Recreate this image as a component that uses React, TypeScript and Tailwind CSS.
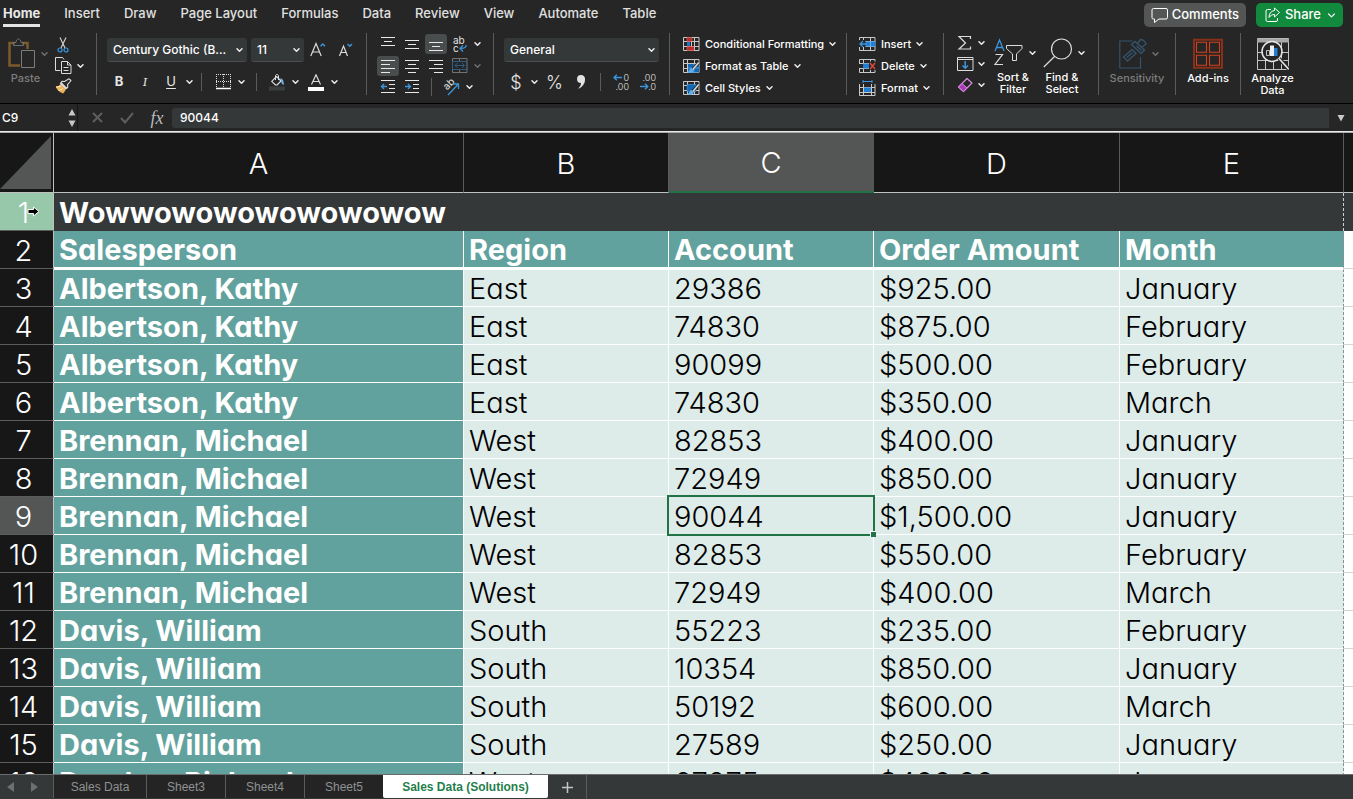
import React from "react";

type Kids = { children?: React.ReactNode };

function Chev({ dim = false, big = false }: { dim?: boolean; big?: boolean }) {
  return (
    <svg width={big ? 9 : 7} height={big ? 7 : 6} viewBox="0 0 7 6" fill="none" className="shrink-0" aria-hidden="true">
      <path d="M1 1.7 3.5 4.2 6 1.7" stroke={dim ? "#6f7070" : "#ececec"} strokeWidth={big ? 1.1 : 1.5} strokeLinecap="round" strokeLinejoin="round" />
    </svg>
  );
}

function Btn({ label, className = "", children }: Kids & { label: string; className?: string }) {
  return (
    <button type="button" aria-label={label} className={`flex shrink-0 items-center justify-center ${className}`}>
      {children}
    </button>
  );
}

function Arrow({ label, dim = false, className = "w-4" }: { label: string; dim?: boolean; className?: string }) {
  return (
    <Btn label={label} className={`h-5 ${className}`}>
      <Chev dim={dim} />
    </Btn>
  );
}

function Group({ className, children }: Kids & { className: string }) {
  return <div className={`h-[62px] shrink-0 border-r border-[#5a5b5b] ${className}`}>{children}</div>;
}

function Rule() {
  return <span className="block h-[18px] w-px shrink-0 bg-[#5a5b5b]" />;
}

function Pick({ label, value, className }: { label: string; value: string; className: string }) {
  return (
    <label className={`relative block h-6 shrink-0 ${className}`}>
      <select aria-label={label} className="block h-full w-full appearance-none rounded-[3px] border-b border-[#4a4e4f] bg-[#343839] pl-1.5 pr-4 text-[12px] font-medium text-white outline-none">
        <option>{value}</option>
      </select>
      <span className="pointer-events-none absolute right-1 top-[9px]">
        <Chev />
      </span>
    </label>
  );
}

const PasteIcon = () => (
  <svg width="28" height="32" viewBox="0 0 28 32" fill="none">
    <path d="M7 5H1.500V27.500H12" stroke="#7d5a2c" strokeWidth="2.500" />
    <path d="M14 5h5.500v6" stroke="#7d5a2c" strokeWidth="2.500" />
    <path d="M5.500 7.500V4.500H8C8 2.500 9 1 10.500 1S13 2.500 13 4.500h2.500v3z" stroke="#6d6e6e" />
    <path d="M13.500 12.500h13v17h-13z" fill="#262626" stroke="#7b7c7c" />
  </svg>
);
const CutIcon = () => (
  <svg width="12" height="16" viewBox="0 0 12 16" fill="none">
    <path d="M3 .5 8 11M9 .5 4 11" stroke="#d8d8d8" strokeWidth="1.100" />
    <circle cx="3" cy="13" r="2" stroke="#3b95dc" strokeWidth="1.200" />
    <circle cx="9" cy="13" r="2" stroke="#3b95dc" strokeWidth="1.200" />
  </svg>
);
const CopyIcon = () => (
  <svg width="17" height="17" viewBox="0 0 17 17" fill="none" stroke="#dcdcdc">
    <path d="M5.500 13.500h-5V.5h7l1.500 2" />
    <path d="M6.500 4.500h6l3.500 3.500v8.500H6.500z" fill="#262626" />
    <path d="M12.500 4.500V8H16M8.500 10.500h5M8.500 13.500h5" />
  </svg>
);
const BrushIcon = () => (
  <svg width="17" height="16" viewBox="0 0 17 16" fill="none">
    <path d="M5.500 6C4 8 2.500 8.500.7 8.500c1 3 3.800 5.700 7.300 7 1.500-1.500 2.500-3 2.800-4.500z" fill="#eeb155" />
    <path d="M1 9c2 0 3.500-.3 5-1M3.500 12.200c1.800 0 3-.6 4.200-1.700" stroke="#fff1d5" />
    <path d="m6 4.500 5.800 5.800 1-1.300-.3-2.300L16 2.500 14 .8 9.500 3.500 7 3.300z" stroke="#dcdcdc" strokeWidth="1.100" strokeLinejoin="round" fill="#262626" />
    <path d="m5.300 5 6 6" stroke="#dcdcdc" strokeWidth="1.500" />
  </svg>
);
const FontSize = ({ up }: { up: boolean }) => (
  <svg width="16" height="16" viewBox="0 0 16 16" fill="none">
    {up ? <path d="M.8 14 6 1.500 11.200 14M2.500 10h7" stroke="#dcdcdc" strokeWidth="1.200" /> : <path d="M1.500 14 5.500 4 9.500 14M3 10.500h5" stroke="#dcdcdc" strokeWidth="1.200" />}
    <path d={up ? "M10.500 4.200 12.800 2l2.200 2.200" : "M9.500 2 11.800 4.200 14 2"} stroke="#3b95dc" strokeWidth="1.400" />
  </svg>
);
const BordersIcon = () => (
  <svg width="16" height="16" viewBox="0 0 16 16" fill="none">
    <path d="M0 .5h15M0 7.500h15" stroke="#dcdcdc" strokeDasharray="1 1" />
    <path d="M.5 0v13M7.500 0v13M14.500 0v13" stroke="#dcdcdc" strokeDasharray="1 1" />
    <path d="M0 14.500h15" stroke="#fff" strokeWidth="1.500" />
  </svg>
);
const FillIcon = () => (
  <svg width="17" height="17" viewBox="0 0 17 17" fill="none">
    <path d="M0 12.500h16v4H0z" fill="#3a3e3f" />
    <path d="M7.500 2.500 2.700 7.300 6.500 11h1.500l4-4z" stroke="#dcdcdc" strokeWidth="1.100" strokeLinejoin="round" />
    <path d="M6.500 6V2C6.500 0 9.500 0 9.500 2v4" stroke="#dcdcdc" />
    <path d="M11 4.500c2.500-.5 4 2 3.800 6.500-1.700-.5-2.800-2.500-2.600-4z" fill="#6fb4ec" />
  </svg>
);
const FontColorIcon = () => (
  <svg width="17" height="17" viewBox="0 0 17 17" fill="none">
    <path d="M0 13h16v4H0z" fill="#fff" />
    <path d="M3.500 10.500 8 .8l4.500 9.700M5 7.500h6" stroke="#dcdcdc" strokeWidth="1.200" />
  </svg>
);
const Lines = ({ d }: { d: string }) => (
  <svg width="16" height="16" viewBox="0 0 16 16" fill="none">
    <path d={d} stroke="#e8e8e8" />
  </svg>
);
const IndentIcon = ({ out }: { out: boolean }) => (
  <svg width="16" height="16" viewBox="0 0 16 16" fill="none">
    <path d="M1 1.500h14M9 5.500h6M9 9.500h6M1 13.500h14" stroke="#e8e8e8" />
    <path d={out ? "M7 7.500H1.500M4 5 1.500 7.500 4 10" : "M1 7.500h5.500M4 5l2.500 2.500L4 10"} stroke="#3b95dc" strokeWidth="1.300" />
  </svg>
);
const WrapIcon = () => (
  <svg width="16" height="17" viewBox="0 0 16 17" fill="none">
    <text x="1" y="8" fontSize="10" fontFamily="Inter, sans-serif" fill="#e2e2e2">ab</text>
    <text x="1" y="16" fontSize="10" fontFamily="Inter, sans-serif" fill="#e2e2e2">c</text>
    <path d="M14 9c.5 2-1 3.500-6 3.500M11 9.500l-3 3 3 3" stroke="#3b95dc" strokeWidth="1.400" />
  </svg>
);
const MergeIcon = () => (
  <svg width="16" height="16" viewBox="0 0 16 16" fill="none">
    <path d="M.5.500h14.500v14H.5zM7.500.5v3M7.500 11.500v3" stroke="#707273" />
    <path d="M.5 3.500h14.500v8H.5zM3 7.500h9.500M5.500 5 3 7.500 5.500 10M10 5l2.500 2.500L10 10" stroke="#2f5b7d" />
  </svg>
);
const OrientIcon = () => (
  <svg width="18" height="17" viewBox="0 0 18 17" fill="none">
    <text x="4" y="11" fontSize="10" fontFamily="Inter, sans-serif" fill="#e2e2e2" transform="rotate(-45 5 10)">ab</text>
    <path d="M6 16 16 5.500M11.500 5H16.500V10" stroke="#3b95dc" strokeWidth="1.300" />
  </svg>
);
const DecimalIcon = ({ inc }: { inc: boolean }) => (
  <svg width="17" height="18" viewBox="0 0 17 18" fill="none">
    <text x="16" y="8" textAnchor="end" fontSize="9" fontFamily="Inter, sans-serif" fill="#e2e2e2">{inc ? "0" : ".00"}</text>
    <text x="16" y="17" textAnchor="end" fontSize="9" fontFamily="Inter, sans-serif" fill="#e2e2e2">{inc ? ".00" : ".0"}</text>
    <path d={inc ? "M9 4.500H1M3.800 1.700 1 4.500l2.800 2.800" : "M0 13.500h7.500M5 10.700l2.800 2.800L5 16.300"} stroke="#3b95dc" strokeWidth="1.400" />
  </svg>
);
const Grid = ({ children }: Kids) => (
  <svg width="17" height="16" viewBox="0 0 17 16" fill="none">
    <path d="M.5 1.500h15.500v13H.5zM.5 5.500h15.500M.5 10.500h15.500M4.500 1v13.500M11.500 1v13.500" stroke="#c9c9c9" />
    {children}
  </svg>
);
const CondIcon = () => (
  <Grid>
    <path d="M4 1.500h5v4H4zM4 10.500h7v4H4z" fill="#b92c2c" stroke="#e05a5a" strokeWidth=".6" />
    <path d="M4 6h3v4H4z" fill="#1f74c4" />
    <path d="M8.500 5.500v5" stroke="#c9c9c9" />
  </Grid>
);
const pen = (
  <>
    <path d="M15.500 3 8 10.500 10 12.500 16.500 6z" fill="#262626" />
    <path d="m15.800 4.500-6 7" stroke="#d8d8d8" strokeWidth="1.600" />
    <path d="M8.500 10c-2 .2-1.500 3-4.500 4 2.500 2 6.800 1 6.800-2z" fill="#5fb0ec" />
  </>
);
const TableFmtIcon = () => (
  <Grid>
    <path d="M5 6h11v8.500H5z" fill="#1168b8" />
    <path d="M5 10h11M11 6v8" stroke="#5fb0ec" strokeWidth=".7" />
    {pen}
  </Grid>
);
const StylesIcon = () => (
  <Grid>
    <path d="M4 4.500h9v7H4z" fill="#1168b8" stroke="#5fb0ec" strokeWidth=".5" />
    {pen}
  </Grid>
);
const InsertIcon = () => (
  <Grid>
    <path d="M0 4h6.500v7H0z" fill="#262626" />
    <path d="M6.500 5.500h10v5h-10z" fill="#1f7fd4" />
    <path d="M11.500 5.500v5" stroke="#7fc0f4" strokeWidth=".8" />
    <path d="M8 8H1M4 5 1 8l3 3" stroke="#3b95dc" strokeWidth="1.300" />
  </Grid>
);
const DeleteIcon = () => (
  <Grid>
    <path d="M0 6h4v4H0z" fill="#262626" />
    <path d="M4 5.500h6v5H4z" fill="#1f7fd4" />
    <path d="M10 3.500h7v8.500h-7z" fill="#262626" />
    <path d="m11 5 5 6M16 5l-5 6" stroke="#e2483d" strokeWidth="1.400" />
  </Grid>
);
const FormatIcon = () => (
  <svg width="17" height="17" viewBox="0 0 17 17" fill="none">
    <path d="M.5 4v11.500h15.500V4M.5 7.500h15.500M.5 12.500h15.500M4.500 4v11.500M12.500 4v11.500" stroke="#c9c9c9" />
    <path d="M5 7.500h7v4.500H5z" fill="#1f7fd4" />
    <path d="M4 1.500h9M4 0v3M13 0v3" stroke="#3b95dc" />
  </svg>
);
const SigmaIcon = () => (
  <svg width="16" height="16" viewBox="0 0 16 16" fill="none">
    <path d="M13.500 4V1.500H2L8.500 8 2 14h11.500v-2.500" stroke="#dcdcdc" strokeWidth="1.200" />
  </svg>
);
const FillDownIcon = () => (
  <svg width="17" height="16" viewBox="0 0 17 16" fill="none">
    <path d="M.5 1.500h15.500v13H.5zM.5 3.500h15.500" stroke="#dcdcdc" />
    <path d="M8.200 5v7M5.500 9.500l2.700 2.700 2.800-2.700" stroke="#3b95dc" strokeWidth="1.500" />
  </svg>
);
const EraserIcon = () => (
  <svg width="16" height="16" viewBox="0 0 16 16" fill="none">
    <path d="M10 1.500 15 6l-8.500 8.500-5-4.500z" stroke="#d58be0" strokeWidth="1.200" strokeLinejoin="round" />
    <path d="M5 6.500 1.500 10l5 4.500 3.500-3.500z" fill="#a93bb8" stroke="#d58be0" />
  </svg>
);
const SortIcon = () => (
  <svg width="30" height="30" viewBox="0 0 30 30" fill="none">
    <path d="M1 13 5.500 2 10 13M2.500 9.500h6" stroke="#3b95dc" strokeWidth="1.300" />
    <path d="M1.500 16.500h7L1 26.500h8" stroke="#dcdcdc" strokeWidth="1.200" />
    <path d="M12.500 7.500H28v3l-5.500 5.500v6.500h-4V16l-6-5.500z" stroke="#dcdcdc" />
  </svg>
);
const FindIcon = () => (
  <svg width="30" height="30" viewBox="0 0 30 30" fill="none" stroke="#dcdcdc" strokeWidth="1.200">
    <circle cx="18.500" cy="11" r="10" />
    <path d="M11.500 18.500.8 29" />
  </svg>
);
const SensIcon = () => (
  <svg width="28" height="32" viewBox="0 0 28 32" fill="none" stroke="#33546c">
    <path d="M13.500 3H.8v27h20.700V19" strokeWidth="1.200" />
    <path d="m4.500 19 8.500-7.500 4 4L8.500 23z" strokeWidth="1.300" />
    <path d="m7.800 19.500 5.500-5" strokeWidth="1.300" />
    <path d="m12.500 6.500 3.500-3 9.500 8.500-3.500 3.500z" strokeWidth="1.400" />
    <path d="m18.500 5.500 3-4c2 0 5 2 5.500 4.500l-4.500 3.500M17.500 8l5 4.500" strokeWidth="1.400" />
  </svg>
);
const AddInsIcon = () => (
  <svg width="30" height="32" viewBox="0 0 30 32" fill="none">
    <path d="M1 1.700h28v28H1z" stroke="#8a3019" strokeWidth="2" />
    <path d="M3.500 4.200h10v10h-10zM16.500 4.200h10v10h-10zM3.500 17.200h10v10h-10zM16.500 17.200h10v10h-10z" stroke="#d0421d" strokeWidth="1.100" />
  </svg>
);
const AnalyzeIcon = () => (
  <svg width="34" height="34" viewBox="0 0 34 34" fill="none">
    <path d="M1.500 1.500h31v31h-31zM1.500 15.500h31M1.500 23.500h31M9.500 23v9M17.500 23v9M25.500 5v27" stroke="#c4c4c4" />
    <path d="M1 1.500h32v4H1z" fill="#a8a8a8" />
    <circle cx="16" cy="14.500" r="10" fill="#262626" stroke="#e6e6e6" strokeWidth="1.500" />
    <path d="m23 21.500 9.500 10.500" stroke="#262626" strokeWidth="4" />
    <path d="m23 21.500 9.500 10.500" stroke="#e6e6e6" strokeWidth="1.700" />
    <path d="M10.500 13.500h3V18.500h-3z" stroke="#c4c4c4" />
    <path d="M14 8.500h4v10.500h-4z" fill="#f0f0f0" />
    <path d="M18 11h3.500v8H18z" fill="#1f7fd4" />
  </svg>
);

const menuTabs = ["Home", "Insert", "Draw", "Page Layout", "Formulas", "Data", "Review", "View", "Automate", "Table"];

function MenuBar() {
  return (
    <header className="flex h-7 shrink-0 items-start justify-between pl-[3px] pr-2.5">
      <nav className="flex gap-6" aria-label="Ribbon tabs">
        {menuTabs.map((t, i) => (
          <a key={t} href="#ribbon" className={`border-b-3 pt-[3px] text-[13px] leading-[21px] ${i === 0 ? "border-[#e4e4e4] font-bold text-[#e8e8e8]" : "border-transparent font-medium text-[#e0e0e0]"}`}>
            {t}
          </a>
        ))}
      </nav>
      <div className="flex gap-2.5 pt-[3px]">
        <button type="button" className="flex h-6 items-center gap-[3px] rounded-[5px] bg-[#545655] px-[7px] text-[13px] font-medium text-white">
          <svg width="18" height="17" viewBox="0 0 18 17" fill="none">
            <path d="M2.500 1.500h12.500a1.500 1.500 0 0 1 1.500 1.500v7.500A1.500 1.500 0 0 1 15 12H8l-4.500 3.500V12h-1A1.500 1.500 0 0 1 1 10.500V3a1.500 1.500 0 0 1 1.500-1.500z" stroke="#fff" strokeLinejoin="round" />
          </svg>
          Comments
        </button>
        <button type="button" className="flex h-6 items-center gap-1 rounded-[5px] bg-[#128a3e] pl-2 pr-[7px] text-[13px] font-medium text-white">
          <svg width="17" height="16" viewBox="0 0 17 16" fill="none" stroke="#fff" strokeLinejoin="round">
            <path d="M7 2.500H3.500A1.500 1.500 0 0 0 2 4v9a1.500 1.500 0 0 0 1.500 1.500H12a1.500 1.500 0 0 0 1.500-1.500v-2" />
            <path d="M10.500 1 15.500 5.500l-5 4.500V7.500C8 7.500 6.500 8.500 5 10.500c0-4 2-6.500 5.500-7z" />
          </svg>
          Share
          <span className="pl-0.5"><Chev big /></span>
        </button>
      </div>
    </header>
  );
}

const alignRows = [
  ["Top align", "M1 1.500h14M4 5.500h8M1 9.500h14", "Middle align", "M1 4.500h14M4 8.500h8M1 12.500h14", "Bottom align", "M1 6.500h14M4 10.500h8M1 14.500h14"],
  ["Align left", "M1 2.500h14M1 6.500h9M1 10.500h14M1 14.500h9", "Center", "M1 2.500h14M4 6.500h8M1 10.500h14M4 14.500h8", "Align right", "M1 2.500h14M6 6.500h9M1 10.500h14M6 14.500h9"],
];

function MenuItem({ icon, text }: { icon: React.ReactNode; text: string }) {
  return (
    <button type="button" className="flex h-[22px] items-center gap-[5px] text-[11px] font-medium text-white">
      {icon}
      <span>{text}</span>
      <Chev />
    </button>
  );
}

function BigButton({ icon, lines, dim = false, arrow = false, className }: { icon: React.ReactNode; lines: string[]; dim?: boolean; arrow?: boolean; className: string }) {
  return (
    <button type="button" className={`flex h-full shrink-0 flex-col items-center pt-1 text-[11px] font-medium leading-3 ${dim ? "text-[#7d7e7e]" : "text-white"} ${className}`}>
      <span className={`mb-0.5 flex h-[33px] items-center gap-[5px] ${arrow ? "-mr-1" : ""}`}>
        {icon}
        {arrow && <Chev dim={dim} />}
      </span>
      {lines.map((l) => (
        <span key={l}>{l}</span>
      ))}
    </button>
  );
}

function Ribbon() {
  return (
    <section id="ribbon" className="flex h-[76px] shrink-0 items-start overflow-hidden border-b border-black pt-[5px]" aria-label="Home ribbon">
      <Group className="flex w-[97px]">
        <BigButton className="w-[51px]" icon={<PasteIcon />} lines={["Paste"]} dim arrow />
        <div className="flex flex-col pl-1 pt-[3px]">
          <Btn label="Cut" className="h-[18px] w-4"><CutIcon /></Btn>
          <div className="flex h-6 items-center">
            <Btn label="Copy" className="w-[17px]"><CopyIcon /></Btn>
            <Arrow label="Copy options" />
          </div>
          <Btn label="Format painter" className="h-[18px] w-[17px]"><BrushIcon /></Btn>
        </div>
      </Group>
      <Group className="w-[270px] pl-2.5 pt-[5px]">
        <div className="flex gap-1">
          <Pick label="Font" value="Century Gothic (B..." className="w-[140px]" />
          <Pick label="Font size" value="11" className="w-[53px]" />
          <Btn label="Increase font size" className="w-5"><FontSize up /></Btn>
          <Btn label="Decrease font size" className="ml-1 w-5"><FontSize up={false} /></Btn>
        </div>
        <div className="mt-2 flex h-6 items-center text-[13px] text-[#e6e6e6]">
          <Btn label="Bold" className="w-6 font-bold">B</Btn>
          <Btn label="Italic" className="w-7 font-serif italic">I</Btn>
          <Btn label="Underline" className="w-6 underline underline-offset-2">U</Btn>
          <Arrow label="Underline options" className="mr-1.5 w-3" />
          <Rule />
          <Btn label="Borders" className="ml-3.5 w-[16px]"><BordersIcon /></Btn>
          <Arrow label="Border options" className="mr-1.5 w-[18px]" />
          <Rule />
          <Btn label="Fill color" className="ml-3 w-[17px]"><FillIcon /></Btn>
          <Arrow label="Fill color options" className="w-[18px]" />
          <Btn label="Font color" className="ml-1 w-[17px]"><FontColorIcon /></Btn>
          <Arrow label="Font color options" className="w-[18px]" />
        </div>
      </Group>
      <Group className="w-[127px] pl-2.5">
        {alignRows.map((r, i) => (
          <div key={r[0]} className="flex h-[22px] items-center gap-0.5">
            {[0, 2, 4].map((k) => (
              <Btn key={r[k]} label={r[k]} className={`h-5 w-[22px] rounded-[3px] ${(i === 0 && k === 4) || (i === 1 && k === 0) ? "bg-[#4a4d4d]" : ""}`}>
                <Lines d={r[k + 1]} />
              </Btn>
            ))}
            <Btn label={i === 0 ? "Wrap text" : "Merge"} className="ml-0.5 w-[18px]">{i === 0 ? <WrapIcon /> : <MergeIcon />}</Btn>
            <Arrow label={i === 0 ? "Wrap options" : "Merge options"} dim={i === 1} className="w-3" />
          </div>
        ))}
        <div className="flex h-5 items-center gap-0.5">
          <Btn label="Decrease indent" className="w-[22px]"><IndentIcon out /></Btn>
          <Btn label="Increase indent" className="w-[22px]"><IndentIcon out={false} /></Btn>
          <span className="px-1.5"><Rule /></span>
          <Btn label="Orientation" className="ml-0.5 w-[18px]"><OrientIcon /></Btn>
          <Arrow label="Orientation options" className="w-[14px]" />
        </div>
      </Group>
      <Group className="w-44 pl-2.5 pt-[5px]">
        <Pick label="Number format" value="General" className="w-[155px]" />
        <div className="mt-2 flex h-6 items-center text-[18px] font-light text-[#e6e6e6]">
          <Btn label="Accounting format" className="w-6">$</Btn>
          <Arrow label="Accounting options" className="w-3" />
          <Btn label="Percent style" className="w-[29px]">%</Btn>
          <Btn label="Comma style" className="mr-2 w-[23px]">
            <svg width="10" height="14" viewBox="0 0 10 14"><path d="M5 0a4 4 0 0 1 4 4.500C9 9 6 12.500 2 13.800c2-2 3-3.800 3-5.800A4 4 0 1 1 5 0z" fill="#e2e2e2" /></svg>
          </Btn>
          <Rule />
          <Btn label="Increase decimal" className="ml-3 w-[17px]"><DecimalIcon inc /></Btn>
          <Btn label="Decrease decimal" className="ml-2.5 w-[17px]"><DecimalIcon inc={false} /></Btn>
        </div>
      </Group>
      <Group className="w-[177px] pl-[13px]">
        <MenuItem icon={<CondIcon />} text="Conditional Formatting" />
        <MenuItem icon={<TableFmtIcon />} text="Format as Table" />
        <MenuItem icon={<StylesIcon />} text="Cell Styles" />
      </Group>
      <Group className="w-[97px] pl-3">
        <MenuItem icon={<InsertIcon />} text="Insert" />
        <MenuItem icon={<DeleteIcon />} text="Delete" />
        <MenuItem icon={<FormatIcon />} text="Format" />
      </Group>
      <Group className="flex w-[155px] pl-3">
        <div className="flex flex-col">
          {[<SigmaIcon key="s" />, <FillDownIcon key="f" />, <EraserIcon key="e" />].map((ic, i) => (
            <div key={i} className="flex h-[22px] items-center">
              <Btn label={["AutoSum", "Fill", "Clear"][i]} className="w-[18px]">{ic}</Btn>
              <Arrow label={["AutoSum options", "Fill options", "Clear options"][i]} className="w-[14px]" />
            </div>
          ))}
        </div>
        <BigButton className="w-[50px]" icon={<SortIcon />} lines={["Sort &", "Filter"]} arrow />
        <BigButton className="w-12" icon={<FindIcon />} lines={["Find &", "Select"]} arrow />
      </Group>
      <Group className="flex w-[77px]">
        <BigButton className="w-full" icon={<SensIcon />} lines={["Sensitivity"]} dim arrow />
      </Group>
      <Group className="flex w-[65px]">
        <BigButton className="w-full" icon={<AddInsIcon />} lines={["Add-ins"]} />
      </Group>
      <div className="flex h-[62px] w-[63px]">
        <BigButton className="w-full" icon={<AnalyzeIcon />} lines={["Analyze", "Data"]} />
      </div>
    </section>
  );
}

function FormulaBar() {
  return (
    <section className="flex h-[27px] shrink-0 items-center" aria-label="Formula bar">
      <div className="flex h-full w-[78px] items-center border-r border-[#161616]">
        <input aria-label="Name box" defaultValue="C9" className="w-16 bg-transparent pl-0.5 text-[12px] font-medium text-white outline-none" />
        <svg width="10" height="20" viewBox="0 0 10 20" fill="#c8c8c8" className="ml-[3px]"><path d="M5 1 8.500 7.500h-7zM5 19 8.500 12.500h-7z" /></svg>
      </div>
      <Btn label="Cancel" className="ml-[9px] w-5">
        <svg width="11" height="11" viewBox="0 0 11 11"><path d="m1 1 9 9M10 1l-9 9" stroke="#5d5e5e" strokeWidth="2" /></svg>
      </Btn>
      <Btn label="Enter" className="ml-2.5 w-5">
        <svg width="14" height="12" viewBox="0 0 14 12" fill="none"><path d="m1 6 4 4.500L13 1" stroke="#5d5e5e" strokeWidth="2" /></svg>
      </Btn>
      <Btn label="Insert function" className="ml-2 w-6">
        <span className="font-['Liberation_Serif',serif] text-[18px] italic leading-5 text-[#b9b9b9]">fx</span>
      </Btn>
      <input aria-label="Formula" defaultValue="90044" className="ml-[3px] h-5 min-w-0 flex-1 rounded-l-[3px] bg-[#343839] pl-2 text-[12px] font-medium text-white outline-none" />
      <Btn label="Expand formula bar" className="w-6">
        <svg width="8" height="8" viewBox="0 0 8 8"><path d="M.5 1h7L4 7.500z" fill="#c8c8c8" /></svg>
      </Btn>
    </section>
  );
}

const rows: string[][] = [
  ["Albertson, Kathy", "East", "29386", "$925.00", "January"],
  ["Albertson, Kathy", "East", "74830", "$875.00", "February"],
  ["Albertson, Kathy", "East", "90099", "$500.00", "February"],
  ["Albertson, Kathy", "East", "74830", "$350.00", "March"],
  ["Brennan, Michael", "West", "82853", "$400.00", "January"],
  ["Brennan, Michael", "West", "72949", "$850.00", "January"],
  ["Brennan, Michael", "West", "90044", "$1,500.00", "January"],
  ["Brennan, Michael", "West", "82853", "$550.00", "February"],
  ["Brennan, Michael", "West", "72949", "$400.00", "March"],
  ["Davis, William", "South", "55223", "$235.00", "February"],
  ["Davis, William", "South", "10354", "$850.00", "January"],
  ["Davis, William", "South", "50192", "$600.00", "March"],
  ["Davis, William", "South", "27589", "$250.00", "January"],
  ["Dumlao, Richard", "West", "67275", "$400.00", "January"],
];

const rowHead = "h-[38px] border-b border-r border-b-[#5a5b5b] border-r-[#c0c0c0] p-0 pr-1.5 pt-0.5 text-center font-light text-white";
const cell = "p-0 pl-[5px] pt-0.5";
const pageBreak = "border-r border-r-[#8e8e8e] [border-right-style:dashed]";

function Sheet() {
  return (
    <main className="min-h-0 flex-1 overflow-hidden bg-white">
      <table className="w-full table-fixed border-separate border-spacing-0 whitespace-nowrap font-['Century_Gothic',Inter,sans-serif] text-[29px] leading-[34px] [font-feature-settings:'cv11']">
        <colgroup>
          <col className="w-[54px]" />
          <col className="w-[410px]" />
          <col className="w-[205px]" />
          <col className="w-[205px]" />
          <col className="w-[246px]" />
          <col className="w-[224px]" />
          <col />
        </colgroup>
        <thead>
          <tr className="bg-[#171717] text-white">
            <th className="h-[60px] border-b border-r border-[#c0c0c0] p-0">
              <svg width="51" height="53" viewBox="0 0 51 53" aria-label="Select all"><path d="M51 0v53H0z" fill="#545655" /></svg>
            </th>
            {["A", "B", "C", "D", "E"].map((c) => (
              <th key={c} scope="col" className={`border-r p-0 pt-0.5 font-light ${c === "C" ? "border-b-2 border-b-[#217346] border-r-[#545655] bg-[#545655]" : "border-b border-b-[#c0c0c0] border-r-[#5a5b5b]"}`}>
                {c}
              </th>
            ))}
            <th className="border-b border-b-[#c0c0c0] p-0" />
          </tr>
        </thead>
        <tbody>
          <tr className="bg-[#343839] font-bold text-white">
            <th scope="row" className={`${rowHead} relative bg-[#97c8a9]`}>
              1
              <svg width="13" height="11" viewBox="0 0 13 11" className="absolute left-[27px] top-[13px]" aria-hidden="true">
                <path d="M1 3.500h5.500V1L12 5.500 6.500 10V7.500H1z" fill="#000" stroke="#fff" />
              </svg>
            </th>
            <td className={`${cell} border-r border-dashed border-[#d0d0d0]`} colSpan={5}>
              Wowwowowowowowowow
            </td>
            <td className="p-0" />
          </tr>
          <tr className="bg-[#62a29e] text-left font-bold text-white">
            <th scope="row" className={`${rowHead} bg-[#171717]`}>2</th>
            {["Salesperson", "Region", "Account", "Order Amount", "Month"].map((h, i) => (
              <td key={h} className={`${cell} border-b-2 border-b-white ${i < 4 ? "border-r border-r-white" : pageBreak}`}>{h}</td>
            ))}
            <td className="border-b border-[#d4d4d4] bg-white p-0" />
          </tr>
          {rows.map((r, i) => {
            const n = i + 3;
            return (
              <tr key={n} className="bg-[#ddebe9] text-black">
                <th scope="row" className={`${rowHead} ${n === 9 ? "bg-[#545655]" : "bg-[#171717]"}`}>{n}</th>
                {r.map((v, k) => (
                  <td
                    key={k}
                    className={`${cell} border-b border-b-white ${n === 3 ? "border-t border-t-white" : ""} ${k < 4 ? "border-r border-r-white" : pageBreak} ${k === 0 ? "bg-[#62a29e] font-bold text-white" : "font-light"} ${n === 9 && k === 2 ? "relative" : ""}`}
                  >
                    {v}
                    {n === 9 && k === 2 && (
                      <span className="pointer-events-none absolute -bottom-0.5 -left-0.5 -right-0.5 -top-0.5 border-2 border-[#217346]">
                        <span className="absolute -bottom-[3px] -right-[3px] box-content size-[5px] border-l border-t border-white bg-[#217346]" />
                      </span>
                    )}
                  </td>
                ))}
                <td className="border-b border-[#d4d4d4] bg-white p-0" />
              </tr>
            );
          })}
        </tbody>
      </table>
    </main>
  );
}

function SheetTabs() {
  return (
    <footer className="flex h-[25px] shrink-0 items-start border-t border-[#6a6c6c] bg-[#343839] font-['Liberation_Sans',sans-serif] text-[12px] text-[#8f9292]">
      <div className="flex h-full w-[53px] shrink-0 items-center gap-[15px] pl-[7px]">
        <Btn label="Previous sheet"><svg width="8" height="10" viewBox="0 0 8 10"><path d="M7 0v10L0 5z" fill="#6d7070" /></svg></Btn>
        <Btn label="Next sheet"><svg width="8" height="10" viewBox="0 0 8 10"><path d="M1 0v10l7-5z" fill="#6d7070" /></svg></Btn>
      </div>
      {["Sales Data", "Sheet3", "Sheet4", "Sheet5"].map((t, i) => (
        <button key={t} type="button" className={`h-[23px] shrink-0 border-l border-[#5a5b5b] bg-[#242424] ${i === 0 ? "w-[93px]" : "w-[79px]"}`}>{t}</button>
      ))}
      <button type="button" className="h-[23px] w-[165px] shrink-0 rounded-b-[2px] bg-white font-bold text-[#1f7f4c]">Sales Data (Solutions)</button>
      <button type="button" aria-label="Add sheet" className="flex h-6 w-[39px] items-center justify-center border-r border-[#5a5b5b]">
        <svg width="11" height="11" viewBox="0 0 11 11"><path d="M5.500 0v11M0 5.500h11" stroke="#c4c4c4" strokeWidth="1.500" /></svg>
      </button>
    </footer>
  );
}

export default function App() {
  return (
    <div className="flex h-screen flex-col overflow-hidden bg-[#262626] font-['Inter',sans-serif]">
      <MenuBar />
      <Ribbon />
      <FormulaBar />
      <div className="h-0.5 shrink-0 border-b border-[#a9abad] bg-[#e8e8ea]" />
      <Sheet />
      <SheetTabs />
    </div>
  );
}
